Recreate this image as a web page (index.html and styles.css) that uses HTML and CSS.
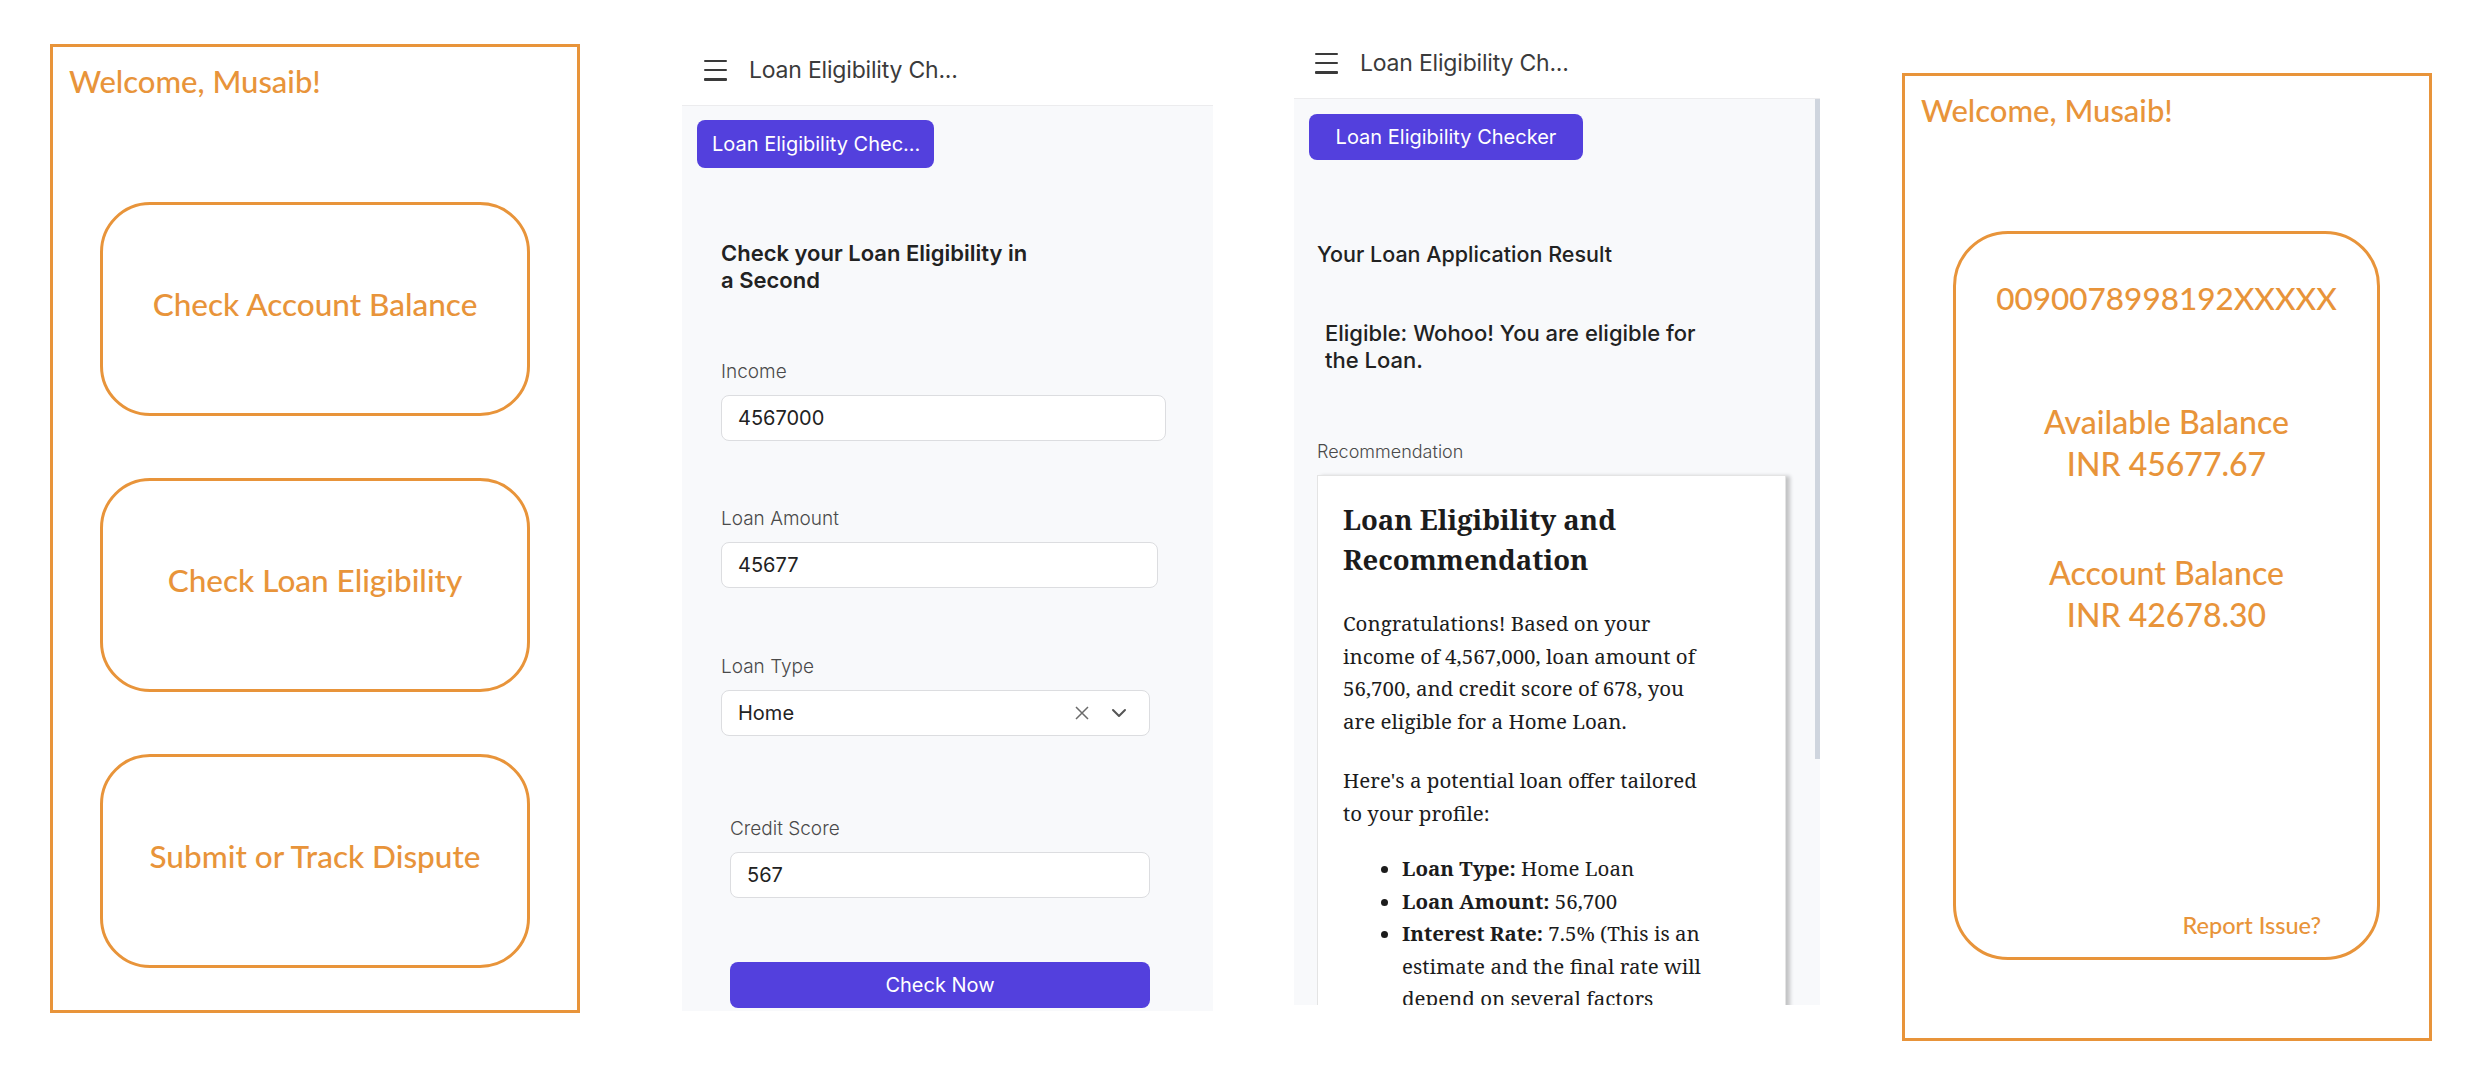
FILE: index.html
```html
<!DOCTYPE html>
<html lang="en">
<head>
<meta charset="utf-8">
<title>Banking Assistant Screens</title>
<link rel="stylesheet" href="styles.css">
</head>
<body>
<div class="board">

  <section class="frame home">
    <h1 class="welcome">Welcome, Musaib!</h1>
    <div class="tiles">
      <div class="tile">Check Account Balance</div>
      <div class="tile">Check Loan Eligibility</div>
      <div class="tile">Submit or Track Dispute</div>
    </div>
  </section>

  <section class="app app-form">
    <header class="app-bar">
      <span class="burger"><i></i><i></i><i></i></span>
      <span class="app-title">Loan Eligibility Ch...</span>
    </header>
    <div class="app-body">
      <div class="chip chip-short">Loan Eligibility Chec...</div>
      <h2 class="form-heading">Check your Loan Eligibility in<br>a Second</h2>

      <div class="field field-income">
        <div class="label">Income</div>
        <div class="input">4567000</div>
      </div>
      <div class="field field-amount">
        <div class="label">Loan Amount</div>
        <div class="input">45677</div>
      </div>
      <div class="field field-type">
        <div class="label">Loan Type</div>
        <div class="input select">
          <span class="select-value">Home</span>
          <svg class="ico-clear" width="14" height="14" viewBox="0 0 14 14"><path d="M1 1 L13 13 M13 1 L1 13" stroke="#6b6b6b" stroke-width="1.5" fill="none"/></svg>
          <svg class="ico-chev" width="16" height="10" viewBox="0 0 16 10"><path d="M2 2 L8 8 L14 2" stroke="#555" stroke-width="2" fill="none" stroke-linecap="round" stroke-linejoin="round"/></svg>
        </div>
      </div>
      <div class="field field-score">
        <div class="label">Credit Score</div>
        <div class="input">567</div>
      </div>
      <div class="submit">Check Now</div>
    </div>
  </section>

  <section class="app app-result">
    <header class="app-bar">
      <span class="burger"><i></i><i></i><i></i></span>
      <span class="app-title">Loan Eligibility Ch...</span>
    </header>
    <div class="app-body result-body">
      <div class="result-content">
        <div class="chip chip-full">Loan Eligibility Checker</div>
        <h2 class="result-heading">Your Loan Application Result</h2>
        <p class="result-status">Eligible: Wohoo! You are eligible for<br>the Loan.</p>
        <div class="rec-label">Recommendation</div>
        <article class="rec-card">
          <h3 class="rec-title">Loan Eligibility and<br>Recommendation</h3>
          <p class="rec-text">Congratulations! Based on your<br>income of 4,567,000, loan amount of<br>56,700, and credit score of 678, you<br>are eligible for a Home Loan.</p>
          <p class="rec-text">Here's a potential loan offer tailored<br>to your profile:</p>
          <ul class="rec-list">
            <li><b>Loan Type:</b> Home Loan</li>
            <li><b>Loan Amount:</b> 56,700</li>
            <li><b>Interest Rate:</b> 7.5% (This is an<br>estimate and the final rate will<br>depend on several factors</li>
          </ul>
        </article>
      </div>
      <div class="scroll-track"><div class="scroll-thumb"></div></div>
    </div>
  </section>

  <section class="frame balance">
    <h1 class="welcome">Welcome, Musaib!</h1>
    <div class="balance-card">
      <div class="acc-no">0090078998192XXXXX</div>
      <div class="amount amount-avail">Available Balance<br>INR 45677.67</div>
      <div class="amount amount-acc">Account Balance<br>INR 42678.30</div>
      <div class="report">Report Issue?</div>
    </div>
  </section>

</div>
</body>
</html>
```

FILE: styles.css
```css
html, body {
  margin: 0;
  padding: 0;
  background: #ffffff;
}

.board {
  display: flex;
  align-items: flex-start;
  width: 2492px;
  height: 1076px;
  overflow: hidden;
}

/* ---------- orange frames ---------- */
.frame {
  box-sizing: border-box;
  width: 530px;
  height: 969px;
  border: 3px solid #e8943a;
  color: #e8943a;
  font-family: Lato, "Noto Sans", sans-serif;
  font-weight: 500;
  display: flex;
  flex-direction: column;
  flex-shrink: 0;
}

.home {
  margin-left: 50px;
  margin-top: 44px;
}

.balance {
  margin-left: 82px;
  margin-top: 73px;
  height: 968px;
}

.welcome {
  margin: 0;
  padding: 15px 0 0 16px;
  font-size: 31px;
  font-weight: 500;
  line-height: 38px;
}

.tiles {
  margin-top: 102px;
  display: flex;
  flex-direction: column;
  align-items: center;
  gap: 62px;
}

.tile {
  box-sizing: border-box;
  width: 430px;
  height: 214px;
  flex-shrink: 0;
  border: 3px solid #e8943a;
  border-radius: 50px;
  display: flex;
  align-items: center;
  justify-content: center;
  padding-bottom: 10px;
  font-size: 31.5px;
  line-height: 38px;
}

.balance-card {
  box-sizing: border-box;
  margin: 102px 0 0 48px;
  width: 427px;
  height: 729px;
  flex-shrink: 0;
  border: 3px solid #e8943a;
  border-radius: 55px;
  display: flex;
  flex-direction: column;
  align-items: center;
  padding-top: 45px;
  text-align: center;
}

.acc-no {
  font-size: 31.5px;
  line-height: 38px;
}

.amount {
  font-size: 32px;
  line-height: 42px;
}

.amount-avail { margin-top: 84px; }
.amount-acc { margin-top: 67px; }

.report {
  margin-top: auto;
  align-self: flex-end;
  margin-right: 56px;
  margin-bottom: 18px;
  font-size: 23.5px;
  line-height: 28px;
}

/* ---------- app screenshots ---------- */
.app {
  font-family: Inter, "Noto Sans", sans-serif;
  color: #2a2a2a;
  flex-shrink: 0;
}

.app-form {
  margin-left: 102px;
  width: 531px;
}

.app-result {
  margin-left: 81px;
  width: 526px;
}

.app-bar {
  box-sizing: border-box;
  height: 71px;
  border-bottom: 1px solid #ececee;
  background: #ffffff;
  display: flex;
  align-items: center;
}

.app-form .app-bar {
  margin-top: 35px;
  padding-left: 22px;
}

.app-result .app-bar {
  margin-top: 28px;
  padding-left: 21px;
}

.burger {
  width: 23px;
  height: 21px;
  display: flex;
  flex-direction: column;
  justify-content: space-between;
}

.burger i {
  display: block;
  height: 2.5px;
  background: #3a3a3a;
  border-radius: 1px;
}

.app-title {
  margin-left: 22px;
  font-size: 23px;
  color: #3b3b3b;
  font-weight: 400;
  letter-spacing: -0.2px;
}

.app-body {
  background: #f8f9fb;
  overflow: hidden;
}

.app-form .app-body {
  height: 905px;
  display: flex;
  flex-direction: column;
  align-items: flex-start;
}

.app-body > *,
.result-content > * {
  flex-shrink: 0;
}

.chip {
  box-sizing: border-box;
  background: #5340dd;
  color: #ffffff;
  border-radius: 8px;
  font-size: 20px;
  display: flex;
  align-items: center;
  white-space: nowrap;
}

.chip-short {
  margin: 14px 0 0 15px;
  width: 237px;
  height: 48px;
  padding-left: 15px;
}

.chip-full {
  margin: 15px 0 0 15px;
  width: 274px;
  height: 46px;
  justify-content: center;
}

.form-heading {
  margin: 72px 0 0 39px;
  font-size: 22px;
  font-weight: 600;
  line-height: 27px;
  color: #222222;
}

.field {
  display: flex;
  flex-direction: column;
  margin-left: 39px;
}

.label {
  font-size: 19px;
  line-height: 24px;
  font-weight: 300;
  color: #4a4a4a;
}

.input {
  box-sizing: border-box;
  margin-top: 11px;
  height: 46px;
  background: #ffffff;
  border: 1px solid #dcdde0;
  border-radius: 8px;
  padding-left: 16px;
  display: flex;
  align-items: center;
  font-size: 20px;
  color: #222222;
}

.field-income { margin-top: 66px; }
.field-income .input { width: 445px; }

.field-amount { margin-top: 66px; }
.field-amount .input { width: 437px; }

.field-type { margin-top: 67px; }
.field-type .input { width: 429px; }

.field-score { margin-top: 81px; margin-left: 48px; }
.field-score .input { width: 420px; }

.select-value { flex: 1; }
.ico-clear { margin-right: 22px; }
.ico-chev { margin-right: 22px; }

.submit {
  box-sizing: border-box;
  margin: 64px 0 0 48px;
  width: 420px;
  height: 46px;
  background: #5340dd;
  color: #ffffff;
  border-radius: 8px;
  display: flex;
  align-items: center;
  justify-content: center;
  font-size: 20px;
}

/* ---------- result screen ---------- */
.result-body {
  height: 906px;
  display: flex;
}

.result-content {
  flex: 1;
  display: flex;
  flex-direction: column;
  align-items: flex-start;
  overflow: hidden;
}

.scroll-track {
  width: 5px;
}

.scroll-thumb {
  height: 660px;
  background: #cfd5de;
}

.result-heading {
  margin: 81px 0 0 23px;
  font-size: 21.5px;
  font-weight: 500;
  line-height: 26px;
  color: #222222;
}

.result-status {
  margin: 53px 0 0 31px;
  font-size: 22px;
  font-weight: 500;
  line-height: 27px;
  color: #222222;
}

.rec-label {
  margin: 67px 0 0 23px;
  font-size: 18px;
  font-weight: 300;
  line-height: 22px;
  color: #4a4a4a;
}

.rec-card {
  box-sizing: border-box;
  margin: 12px 0 0 23px;
  width: 469px;
  flex: 1 0 auto;
  background: #ffffff;
  border: 1px solid #e4e4e4;
  border-bottom: none;
  box-shadow: 4px 1px 4px rgba(0, 0, 0, 0.22);
  padding: 24px 0 0 25px;
  font-family: "Noto Serif", "DejaVu Serif", serif;
  color: #1c1c1c;
}

.rec-title {
  margin: 0;
  font-size: 27.5px;
  font-weight: 700;
  line-height: 40px;
}

.rec-text {
  margin: 27px 0 0 0;
  font-size: 20.5px;
  line-height: 32.5px;
  white-space: nowrap;
}

.rec-list {
  margin: 23px 0 0 0;
  padding-left: 59px;
  font-size: 20.5px;
  line-height: 32.5px;
  white-space: nowrap;
}
```
